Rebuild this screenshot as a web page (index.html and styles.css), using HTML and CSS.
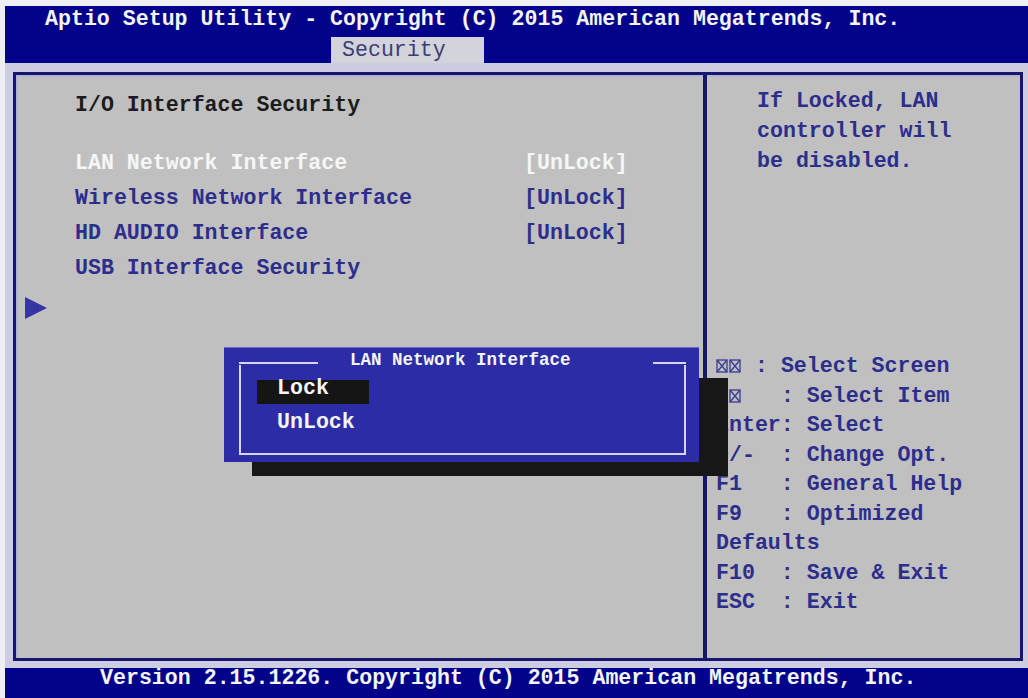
FILE: index.html
```html
<!DOCTYPE html>
<html lang="en">
<head>
    <meta charset="UTF-8">
    <meta name="viewport" content="width=device-width, initial-scale=1.0">
    <title>Aptio Setup Utility</title>
    <link rel="stylesheet" href="styles.css">
</head>
<body>
<div class="screen">
    <!-- title + tabs -->
    <header class="top">
        <div class="title">Aptio Setup Utility - Copyright (C) 2015 American Megatrends, Inc.</div>
        <div class="tabs"><span class="tab active">Security</span></div>
    </header>

    <div class="well">
        <main class="frame">
            <!-- menu items -->
            <section class="pane-left">
                <div class="heading">I/O Interface Security</div>
                <ul class="items">
                    <li class="item selected"><span>LAN Network Interface</span><span>[UnLock]</span></li>
                    <li class="item"><span>Wireless Network Interface</span><span>[UnLock]</span></li>
                    <li class="item"><span>HD AUDIO Interface</span><span>[UnLock]</span></li>
                    <li class="item"><span>USB Interface Security</span></li>
                </ul>
                <div class="pointer"></div>
            </section>

            <!-- help + key legend -->
            <aside class="pane-right">
                <p class="help">If Locked, LAN<br>controller will<br>be disabled.</p>
                <ul class="keys">
                    <li><svg class="kx" width="26" height="14" viewBox="0 0 26 14"><rect x="1" y="1" width="10" height="12"/><path d="M1 1L11 13M11 1L1 13"/><rect x="14" y="1" width="10" height="12"/><path d="M14 1L24 13M24 1L14 13"/></svg> : Select Screen</li>
                    <li><svg class="kx" width="26" height="14" viewBox="0 0 26 14"><rect x="1" y="1" width="10" height="12"/><path d="M1 1L11 13M11 1L1 13"/><rect x="14" y="1" width="10" height="12"/><path d="M14 1L24 13M24 1L14 13"/></svg>   : Select Item</li>
                    <li>Enter: Select</li>
                    <li>+/-  : Change Opt.</li>
                    <li>F1   : General Help</li>
                    <li>F9   : Optimized</li>
                    <li>Defaults</li>
                    <li>F10  : Save &amp; Exit</li>
                    <li>ESC  : Exit</li>
                </ul>
            </aside>

            <!-- option popup -->
            <div class="popup-shadow"></div>
            <div class="popup">
                <div class="popup-head">
                    <span class="rule rule-l"></span>
                    <span class="popup-title">LAN Network Interface</span>
                    <span class="rule rule-r"></span>
                </div>
                <ul class="popup-body">
                    <li class="opt current">Lock</li>
                    <li class="opt">UnLock</li>
                </ul>
            </div>
        </main>
    </div>

    <footer class="bottom">Version 2.15.1226. Copyright (C) 2015 American Megatrends, Inc.</footer>
</div>
</body>
</html>
```

FILE: styles.css
```css
* { margin: 0; padding: 0; box-sizing: border-box; }
ul, li { list-style: none; }

html, body { width: 100%; height: 100%; overflow: hidden; }
body {
    background: #eeeef4;
    font-family: "Liberation Mono", "Courier New", monospace;
    font-size: 21.6px;
    font-weight: bold;
    color: #2d2d8c;
}

.screen {
    width: 1023px;
    margin: 6px 0 0 5px;
}

/* 顶部标题 */
.top {
    height: 57px;
    background: #02028a;
    color: #f4f4f4;
}
.top .title {
    padding-left: 40px;
    line-height: 27px;
    white-space: pre;
}
.tabs {
    margin-top: 4px;
    padding-left: 326px;
    height: 26px;
}
.tab {
    display: inline-block;
    width: 153px;
    height: 26px;
    padding-left: 11px;
    line-height: 26px;
    background: #d3d3dc;
    color: #3c3c72;
    font-weight: normal;
}

/* 主体框 */
.well {
    background: #cdcde2;
    padding: 9px 5px 7px 8px;
}
.frame {
    position: relative;
    display: flex;
    height: 589px;
    border: 3px solid #16166e;
    background: #c0c0c0;
    box-shadow: inset 2px 2px 0 #b2b2d2;
}

.pane-left {
    width: 687px;
    padding: 13px 0 0 9px;
}
.heading {
    padding-left: 50px;
    line-height: 35px;
    color: #1c1c1c;
}
.items {
    margin-top: 23px;
}
.item {
    display: grid;
    grid-template-columns: 449px auto;
    padding-left: 50px;
    line-height: 35px;
    white-space: pre;
}
.item.selected {
    color: #f6f6f6;
}
.pointer {
    margin-top: 11px;
    width: 0;
    height: 0;
    border-left: 22px solid #3434a4;
    border-top: 11px solid transparent;
    border-bottom: 11px solid transparent;
}

.pane-right {
    flex: 1;
    border-left: 4px solid #16166e;
    padding-top: 11px;
}
.help {
    padding-left: 50px;
    line-height: 30px;
}
.keys {
    margin-top: 176px;
    padding-left: 9px;
}
.keys li {
    line-height: 29.5px;
    white-space: pre;
}
.kx {
    vertical-align: -1px;
    fill: none;
    stroke: #3a3a94;
    stroke-width: 1.3;
}

/* 弹出选项 */
.popup-shadow {
    position: absolute;
    left: 236px;
    top: 303px;
    width: 476px;
    height: 98px;
    background: #171717;
}
.popup {
    position: absolute;
    left: 208px;
    top: 272px;
    width: 475px;
    height: 115px;
    padding: 6px 13px 8px 15px;
    background: #2c2ca6;
    border-top: 1px solid #6a6ad0;
    color: #f4f4f4;
}
.popup-head {
    display: flex;
    align-items: flex-start;
    height: 11px;
}
.rule {
    height: 2px;
    margin-top: 8px;
    background: #d6d6f4;
}
.rule-l { width: 79px; }
.rule-r { flex: 1; margin-left: 82px; }
.popup-title {
    padding-left: 32px;
    font-size: 17.5px;
    line-height: 12px;
    white-space: pre;
}
.popup-body {
    height: 90px;
    padding-top: 15px;
    border: 2px solid #d6d6f4;
    border-top: none;
}
.opt {
    width: 112px;
    margin-left: 16px;
    padding-left: 20px;
    line-height: 17px;
    height: 24px;
    padding-bottom: 7px;
}
.opt.current {
    background: #151515;
}
.opt + .opt {
    margin-top: 10px;
}

/* 底部版本 */
.bottom {
    height: 30px;
    padding-left: 95px;
    line-height: 20px;
    background: #02028a;
    color: #f4f4f4;
    white-space: pre;
}
```
